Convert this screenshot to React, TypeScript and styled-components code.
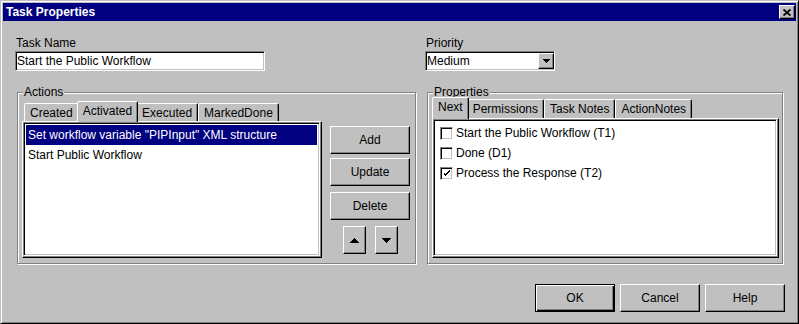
import React from 'react';
import styled, { createGlobalStyle, css } from 'styled-components';

const Global = createGlobalStyle`
  html, body { margin: 0; padding: 0; background: #c0c0c0; }
  body { font-family: "Liberation Sans", Arial, sans-serif; font-size: 12px; color: #000; }
  * { box-sizing: border-box; }
`;

const raised = css`
  border: 1px solid;
  border-color: #fff #000 #000 #fff;
  box-shadow: inset -1px -1px #808080;
`;

const sunken = css`
  border: 1px solid;
  border-color: #808080 #fff #fff #808080;
  box-shadow: inset 1px 1px #000, inset -1px -1px #c0c0c0;
`;

const Window = styled.div`
  width: 799px;
  height: 324px;
  border: 1px solid;
  border-color: #c0c0c0 #000 #000 #c0c0c0;
  box-shadow: inset 1px 1px #fff, inset -1px -1px #808080;
  padding: 2px;
  background: #c0c0c0;
  display: flex;
  flex-direction: column;
`;

const TitleBar = styled.div`
  height: 18px;
  background: #000080;
  display: flex;
  align-items: center;
  justify-content: space-between;
  padding: 0 1px 0 3px;
`;

const Title = styled.span`
  color: #fff;
  font-weight: bold;
  font-size: 12px;
  line-height: 14px;
`;

const CloseButton = styled.div`
  width: 16px;
  height: 14px;
  background: #c0c0c0;
  ${raised};
  display: flex;
  align-items: center;
  justify-content: center;
`;

const Body = styled.div`
  flex: 1;
  display: flex;
  flex-direction: column;
  padding: 15px 0 0 12px;
`;

const TopRow = styled.div`
  display: flex;
`;

const Field = styled.div<{ $offset?: number }>`
  display: flex;
  flex-direction: column;
  margin-left: ${p => p.$offset ?? 0}px;
`;

const Label = styled.label`
  line-height: 14px;
  height: 14px;
  padding-left: 1px;
  margin-bottom: 1px;
`;

const TextBox = styled.div<{ $w: number }>`
  width: ${p => p.$w}px;
  height: 20px;
  background: #fff;
  ${sunken};
  padding: 0 1px 0 1px;
  line-height: 16px;
  display: flex;
  align-items: center;
  white-space: nowrap;
`;

const ComboText = styled.span`
  flex: 1;
`;

const ComboButton = styled.div`
  width: 16px;
  height: 16px;
  margin-right: -1px;
  background: #c0c0c0;
  ${raised};
  display: flex;
  align-items: center;
  justify-content: center;
`;

const GroupRow = styled.div`
  display: flex;
  margin: 21px 0 0 2px;
`;

const GroupBox = styled.div<{ $w: number; $pt: number; $pl: number; $offset?: number }>`
  position: relative;
  width: ${p => p.$w}px;
  height: 172px;
  margin-left: ${p => p.$offset ?? 0}px;
  border: 1px solid #808080;
  box-shadow: inset 1px 1px #fff, 1px 1px #fff;
  padding: ${p => p.$pt}px 0 0 ${p => p.$pl}px;
  display: flex;
`;

const Legend = styled.span`
  position: absolute;
  top: -8px;
  left: 5px;
  padding: 0 1px;
  line-height: 14px;
  background: #c0c0c0;
`;

const TabArea = styled.div<{ $w: number }>`
  width: ${p => p.$w}px;
  display: flex;
  flex-direction: column;
`;

const TabStrip = styled.div<{ $h: number }>`
  position: relative;
  z-index: 1;
  display: flex;
  align-items: flex-end;
  height: ${p => p.$h}px;
  padding-left: 2px;
`;

const Tab = styled.div<{ $active?: boolean }>`
  position: relative;
  height: ${p => (p.$active ? 'calc(100% + 1px)' : 'calc(100% - 2px)')};
  margin: ${p => (p.$active ? '0 -2px -1px' : '0')};
  z-index: ${p => (p.$active ? 2 : 1)};
  padding: 0 5px ${p => (p.$active ? '3px' : '0')};
  border: 1px solid;
  border-bottom: none;
  border-color: #fff #000 transparent #fff;
  border-radius: 2px 2px 0 0;
  box-shadow: inset -1px 0 #808080;
  background: #c0c0c0;
  display: flex;
  align-items: center;
  white-space: nowrap;
`;

const Panel = styled.div<{ $h: number }>`
  height: ${p => p.$h}px;
  border-top: 1px solid #fff;
  border-left: 1px solid #fff;
  border-right: 1px solid #000;
  border-bottom: 1px solid #000;
  padding: 0 1px 1px 0;
  background: #808080;
  display: flex;
`;

const ListBox = styled.div`
  flex: 1;
  background: #fff;
  ${sunken};
  padding: 2px;
  display: flex;
  flex-direction: column;
`;

const ListRow = styled.div<{ $selected?: boolean }>`
  height: 20px;
  line-height: 20px;
  padding-left: 2px;
  white-space: nowrap;
  background: ${p => (p.$selected ? '#000080' : 'transparent')};
  color: ${p => (p.$selected ? '#fff' : '#000')};
`;

const CheckList = styled.div`
  flex: 1;
  background: #fff;
  ${sunken};
  padding: 3px 0 0 6px;
  display: flex;
  flex-direction: column;
`;

const CheckRow = styled.div`
  height: 20px;
  display: flex;
  align-items: center;
  white-space: nowrap;
`;

const CheckBox = styled.span`
  width: 13px;
  height: 13px;
  background: #fff;
  ${sunken};
  display: flex;
  align-items: center;
  justify-content: center;
  margin-right: 3px;
`;

const SideColumn = styled.div`
  width: 80px;
  margin-left: 8px;
  padding-top: 25px;
  display: flex;
  flex-direction: column;
`;

const Button = styled.div<{ $gap?: number; $default?: boolean }>`
  width: 80px;
  height: 28px;
  margin-top: ${p => p.$gap ?? 0}px;
  background: #c0c0c0;
  ${p =>
    p.$default
      ? css`
          border: 1px solid #000;
          box-shadow: inset 1px 1px #fff, inset -1px -1px #000, inset -2px -2px #808080;
        `
      : raised};
  display: flex;
  align-items: center;
  justify-content: center;
`;

const ArrowRow = styled.div`
  display: flex;
  gap: 9px;
  margin-top: 6px;
  padding-left: 13px;
`;

const ArrowButton = styled.div`
  width: 23px;
  height: 28px;
  background: #c0c0c0;
  ${raised};
  display: flex;
  align-items: center;
  justify-content: center;
`;

const ButtonBar = styled.div`
  display: flex;
  justify-content: flex-end;
  gap: 5px;
  margin-top: 20px;
  padding-right: 11px;
`;

const Triangle = ({ up }: { up?: boolean }) => (
  <svg width="9" height="5" viewBox="0 0 9 5" shapeRendering="crispEdges">
    <polygon points={up ? '4.5,0 9,5 0,5' : '0,0 9,0 4.5,5'} fill="#000" />
  </svg>
);

const SmallTriangle = () => (
  <svg width="7" height="4" viewBox="0 0 7 4" shapeRendering="crispEdges">
    <polygon points="0,0 7,0 3.5,4" fill="#000" />
  </svg>
);

const CloseGlyph = () => (
  <svg width="8" height="7" viewBox="0 0 8 7">
    <path d="M0.5 0.5L7.5 6.5M7.5 0.5L0.5 6.5" stroke="#000" strokeWidth="1.8" />
  </svg>
);

const CheckGlyph = () => (
  <svg width="7" height="7" viewBox="0 0 7 7" shapeRendering="crispEdges">
    <path d="M0 2h1v3h1v1h1v-1h1v-1h1v-1h1v-1h1v-2h-1v1h-1v1h-1v1h-1v1h-1v-1h-1v-1h-1z" fill="#000" />
  </svg>
);

const actionTabs = ['Created', 'Activated', 'Executed', 'MarkedDone'];
const propTabs = ['Next', 'Permissions', 'Task Notes', 'ActionNotes'];
const actions = ['Set workflow variable "PIPInput" XML structure', 'Start Public Workflow'];
const nextTasks = [
  { label: 'Start the Public Workflow (T1)', checked: false },
  { label: 'Done (D1)', checked: false },
  { label: 'Process the Response (T2)', checked: true },
];

export default function App() {
  return (
    <>
      <Global />
      <Window>
        <TitleBar>
          <Title>Task Properties</Title>
          <CloseButton>
            <CloseGlyph />
          </CloseButton>
        </TitleBar>
        <Body>
          <TopRow>
            <Field>
              <Label>Task Name</Label>
              <TextBox $w={250}>Start the Public Workflow</TextBox>
            </Field>
            <Field $offset={160}>
              <Label>Priority</Label>
              <TextBox $w={130}>
                <ComboText>Medium</ComboText>
                <ComboButton>
                  <SmallTriangle />
                </ComboButton>
              </TextBox>
            </Field>
          </TopRow>

          <GroupRow>
            <GroupBox $w={399} $pt={8} $pl={4}>
              <Legend>Actions</Legend>
              <TabArea $w={300}>
                <TabStrip $h={20}>
                  {actionTabs.map(t => (
                    <Tab key={t} $active={t === 'Activated'}>
                      {t}
                    </Tab>
                  ))}
                </TabStrip>
                <Panel $h={137}>
                  <ListBox>
                    {actions.map((a, i) => (
                      <ListRow key={a} $selected={i === 0}>
                        {a}
                      </ListRow>
                    ))}
                  </ListBox>
                </Panel>
              </TabArea>
              <SideColumn>
                <Button>Add</Button>
                <Button $gap={4}>Update</Button>
                <Button $gap={6}>Delete</Button>
                <ArrowRow>
                  <ArrowButton>
                    <Triangle up />
                  </ArrowButton>
                  <ArrowButton>
                    <Triangle />
                  </ArrowButton>
                </ArrowRow>
              </SideColumn>
            </GroupBox>

            <GroupBox $w={356} $pt={4} $pl={4} $offset={11}>
              <Legend>Properties</Legend>
              <TabArea $w={347}>
                <TabStrip $h={21}>
                  {propTabs.map(t => (
                    <Tab key={t} $active={t === 'Next'}>
                      {t}
                    </Tab>
                  ))}
                </TabStrip>
                <Panel $h={140}>
                  <CheckList>
                    {nextTasks.map(n => (
                      <CheckRow key={n.label}>
                        <CheckBox>{n.checked && <CheckGlyph />}</CheckBox>
                        {n.label}
                      </CheckRow>
                    ))}
                  </CheckList>
                </Panel>
              </TabArea>
            </GroupBox>
          </GroupRow>

          <ButtonBar>
            <Button $default>OK</Button>
            <Button>Cancel</Button>
            <Button>Help</Button>
          </ButtonBar>
        </Body>
      </Window>
    </>
  );
}
